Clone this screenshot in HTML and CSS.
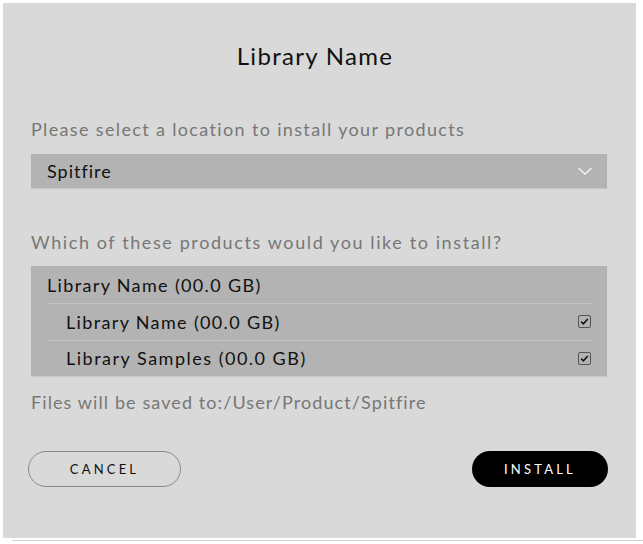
FILE: index.html
```html
<!DOCTYPE html>
<html>
<head>
<meta charset="utf-8">
<link rel="stylesheet" href="styles.css">
</head>
<body>
<div class="panel">
  <h1 class="title">Library Name</h1>
  <p class="label label-first">Please select a location to install your products</p>
  <div class="select">
    <span>Spitfire</span>
    <svg class="chev" width="16" height="10" viewBox="0 0 16 10"><path d="M1.5 2 L8 8 L14.5 2" fill="none" stroke="#f4f4f4" stroke-width="1.3"/></svg>
  </div>
  <p class="label label-second">Which of these products would you like to install?</p>
  <div class="list">
    <div class="row row-parent"><span>Library Name (00.0 GB)</span></div>
    <div class="row row-child"><span>Library Name (00.0 GB)</span><span class="check"><svg width="11" height="11" viewBox="0 0 11 11"><path d="M2.2 5.6 L4.4 7.8 L8.8 3" fill="none" stroke="#111" stroke-width="1.5"/></svg></span></div>
    <div class="row row-child"><span class="samples">Library Samples (00.0 GB)</span><span class="check"><svg width="11" height="11" viewBox="0 0 11 11"><path d="M2.2 5.6 L4.4 7.8 L8.8 3" fill="none" stroke="#111" stroke-width="1.5"/></svg></span></div>
  </div>
  <p class="label label-third">Files will be saved to:/User/Product/Spitfire</p>
  <div class="buttons">
    <button class="btn btn-cancel">CANCEL</button>
    <button class="btn btn-install">INSTALL</button>
  </div>
</div>
<div class="edge"></div>
</body>
</html>
```
FILE: styles.css
```css
html, body {
  margin: 0;
  padding: 0;
  background: #ffffff;
}
body {
  font-family: "Lato", "Liberation Sans", sans-serif;
}
.panel {
  margin: 3px 0 0 3px;
  width: 633px;
  height: 535px;
  box-sizing: border-box;
  background: #d9d9d9;
  padding: 39px 29px 0 28px;
  display: flex;
  flex-direction: column;
}
.edge {
  margin: 2px 0 0 12px;
  height: 1px;
  background: #d0d0d0;
}
.title {
  margin: 0;
  font-size: 24px;
  line-height: 28px;
  font-weight: 400;
  color: #111;
  text-align: center;
  letter-spacing: 1.3px;
  padding-right: 8px;
}
.label {
  margin: 0;
  font-size: 18px;
  line-height: 20px;
  color: #777;
  letter-spacing: 1.35px;
}
.label-first { margin-top: 49px; }
.label-second { margin-top: 44px; letter-spacing: 1.6px; }
.label-third { margin-top: 16px; letter-spacing: 1.1px; }
.select {
  margin-top: 15px;
  height: 34px;
  background: #b3b3b3;
  display: flex;
  align-items: center;
  justify-content: space-between;
  padding: 0 14px 0 16px;
  font-size: 18px;
  letter-spacing: 1px;
  color: #111;
  box-shadow: 0 1px 1px rgba(0,0,0,0.08);
}
.chev { display: block; }
.list {
  margin-top: 14px;
  background: #b3b3b3;
  padding: 0 15px 0 16px;
  box-shadow: 0 1px 1px rgba(0,0,0,0.08);
}
.row {
  height: 37px;
  display: flex;
  align-items: center;
  justify-content: space-between;
  font-size: 18px;
  letter-spacing: 1.35px;
  color: #111;
  box-sizing: border-box;
}
.samples { letter-spacing: 1.5px; }
.row-child {
  border-top: 1px solid #c2c2c2;
  padding-left: 19px;
  padding-right: 1px;
  height: 36.5px;
}
.check {
  width: 11px;
  height: 11px;
  border: 1.5px solid #555;
  border-radius: 2px;
  display: flex;
  align-items: center;
  justify-content: center;
}
.check svg { display: block; }
.buttons {
  margin-top: 39px;
  margin-left: -3px;
  margin-right: -1px;
  display: flex;
  justify-content: space-between;
}
.btn {
  height: 36px;
  border-radius: 18px;
  font-family: "Lato", "Liberation Sans", sans-serif;
  font-size: 13px;
  letter-spacing: 3.2px;
  padding: 0;
  cursor: pointer;
}
.btn-cancel {
  width: 153px;
  background: transparent;
  border: 1px solid #8a8a8a;
  color: #111;
}
.btn-install {
  width: 136px;
  background: #000;
  border: none;
  color: #fff;
}
```
